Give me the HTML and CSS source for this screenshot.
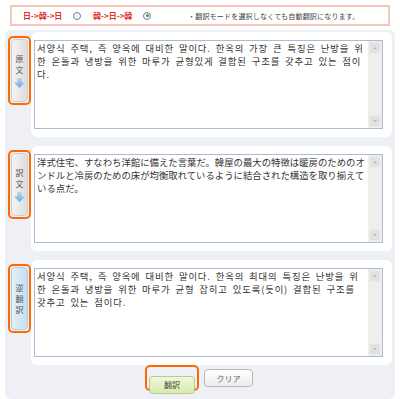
FILE: index.html
```html
<!DOCTYPE html>
<html>

<head>
    <link rel="stylesheet" href="styles.css">
</head>

<body>
    <div class="mode-bar">
        <span class="mode-label">日->韓->日</span>
        <span class="radio"></span>
        <span class="mode-label">韓->日->韓</span>
        <span class="radio checked"></span>
        <span class="mode-note">・翻訳モードを選択しなくても自動翻訳になります。</span>
    </div>

    <div class="panel">
        <div class="section">
            <div class="tab-col">
                <div class="tab">
                    <div class="tab-inner">
                        <span class="tab-text">原<br>文</span>
                        <span class="arrow"></span>
                    </div>
                </div>
            </div>
            <div class="box">
                <div class="field">
                    <textarea class="text ko">서양식 주택, 즉 양옥에 대비한 말이다. 한옥의 가장 큰 특징은 난방을 위한 온돌과 냉방을 위한 마루가 균형있게 결합된 구조를 갖추고 있는 점이다.</textarea>
                    <div class="scrollbar">
                        <span class="sb-btn up"></span>
                        <span class="sb-btn down"></span>
                    </div>
                </div>
            </div>
        </div>

        <div class="section">
            <div class="tab-col">
                <div class="tab">
                    <div class="tab-inner">
                        <span class="tab-text">訳<br>文</span>
                        <span class="arrow"></span>
                    </div>
                </div>
            </div>
            <div class="box">
                <div class="field">
                    <textarea class="text ja">洋式住宅、すなわち洋館に備えた言葉だ。韓屋の最大の特徴は暖房のためのオンドルと冷房のための床が均衡取れているように結合された構造を取り揃えている点だ。</textarea>
                    <div class="scrollbar">
                        <span class="sb-btn up"></span>
                        <span class="sb-btn down"></span>
                    </div>
                </div>
            </div>
        </div>

        <div class="section">
            <div class="tab-col">
                <div class="tab">
                    <div class="tab-inner back">
                        <span class="tab-text">逆<br>翻<br>訳</span>
                    </div>
                </div>
            </div>
            <div class="box">
                <div class="field">
                    <textarea class="text ko">서양식 주택, 즉 양옥에 대비한 말이다. 한옥의 최대의 특징은 난방을 위한 온돌과 냉방을 위한 마루가 균형 잡히고 있도록(듯이) 결합된 구조를 갖추고 있는 점이다.</textarea>
                    <div class="scrollbar">
                        <span class="sb-btn up"></span>
                        <span class="sb-btn down"></span>
                    </div>
                </div>
            </div>
        </div>

        <div class="actions">
            <div class="btn-focus">
                <button class="btn translate">翻訳</button>
            </div>
            <button class="btn clear">クリア</button>
        </div>
    </div>
</body>

</html>
```

FILE: styles.css
```css
body {
    margin: 0;
    background-color: #fff;
    font-family: "Noto Sans CJK JP", "Noto Sans CJK KR", sans-serif;
    color: #333;
}

.mode-bar {
    margin: 5px 0 0 10px;
    width: 380px;
    height: 21px;
    box-sizing: border-box;
    border: 2px solid #f8c6bd;
    display: flex;
    align-items: center;
    padding-left: 11px;
    white-space: nowrap;
}

.mode-label {
    color: #e2332b;
    font-weight: bold;
    font-size: 8px;
    width: 40px;
    margin-right: 10px;
}

.radio {
    width: 6px;
    height: 6px;
    border: 1px solid #6f7fa8;
    border-radius: 50%;
    background-color: #f4f6fa;
    margin-right: 12px;
    display: flex;
    align-items: center;
    justify-content: center;
}

.radio.checked {
    margin-right: 37px;
}

.radio.checked::after {
    content: "";
    width: 3px;
    height: 3px;
    border-radius: 50%;
    background-color: #3d9b35;
}

.mode-note {
    font-size: 7px;
    letter-spacing: 0.2px;
    color: #444;
}

.panel {
    margin: 4px 5px 0 5px;
    background-color: #eef0f5;
    border-radius: 6px;
    padding-top: 2px;
    height: 369px;
    box-sizing: border-box;
}

.section {
    display: flex;
    margin-bottom: 9px;
}

.tab-col {
    width: 26px;
    padding-top: 4px;
}

.tab {
    margin-left: 3px;
    width: 23px;
    height: 69px;
    box-sizing: border-box;
    border: 2px solid #ff6a00;
    border-radius: 5px;
    padding: 1px;
}

.tab-inner {
    height: 100%;
    box-sizing: border-box;
    border-radius: 4px;
    background: linear-gradient(to right, #f4f4f4, #dcdcdc);
    border: 1px solid #cfcfcf;
    display: flex;
    flex-direction: column;
    align-items: center;
    justify-content: center;
    gap: 3px;
}

.tab-inner.back {
    background: linear-gradient(to right, #e4f1fb, #c4def2);
    border-color: #b6cde0;
}

.tab-text {
    font-size: 8px;
    line-height: 11px;
    color: #555;
    text-align: center;
}

.arrow {
    width: 11px;
    height: 10px;
    background: linear-gradient(#b5d5f2, #6fa9de);
    clip-path: polygon(30% 0, 70% 0, 70% 45%, 100% 45%, 50% 100%, 0 45%, 30% 45%);
}

.box {
    width: 361px;
    height: 105px;
    box-sizing: border-box;
    background-color: #fff;
    border-radius: 6px;
    padding: 8px 9px 8px 3px;
}

.field {
    height: 89px;
    box-sizing: border-box;
    border: 1px solid #a7bdd3;
    display: flex;
}

.text {
    flex: 1;
    border: none;
    outline: none;
    resize: none;
    overflow: hidden;
    padding: 1px 2px;
    margin: 0;
    font-size: 9.4px;
    line-height: 13px;
    color: #333;
}

.text.ko {
    font-family: "Noto Sans CJK KR", sans-serif;
    word-spacing: 2px;
    letter-spacing: 0.85px;
}

.text.ja {
    font-family: "Noto Sans CJK JP", sans-serif;
}

.scrollbar {
    width: 14px;
    background-color: #eeeeee;
    display: flex;
    flex-direction: column;
    justify-content: space-between;
    align-items: center;
    padding: 1px 0;
    box-sizing: border-box;
}

.sb-btn {
    width: 12px;
    height: 12px;
    background-color: #e2e2e2;
    border: 1px solid #ececec;
    box-sizing: border-box;
    position: relative;
}

.sb-btn::after {
    content: "";
    position: absolute;
    left: 3px;
    width: 0;
    height: 0;
    border-left: 2px solid transparent;
    border-right: 2px solid transparent;
}

.sb-btn.up::after {
    top: 4px;
    border-bottom: 2px solid #b4b4b4;
}

.sb-btn.down::after {
    top: 4px;
    border-top: 2px solid #b4b4b4;
}

.actions {
    display: flex;
    justify-content: center;
    align-items: center;
    gap: 5px;
    margin-top: -9px;
    margin-right: 2px;
}

.btn-focus {
    width: 54px;
    height: 26px;
    box-sizing: border-box;
    border: 2px solid #ff6a00;
    border-radius: 5px;
    padding: 2px;
}

.btn {
    font-family: "Noto Sans CJK JP", sans-serif;
    font-size: 8px;
    border-radius: 4px;
    padding: 0;
    cursor: pointer;
}

.btn.translate {
    width: 100%;
    height: 100%;
    border: 1px solid #b8c89a;
    background: linear-gradient(#f0f8da, #d8ebac);
    color: #444;
}

.btn.clear {
    width: 49px;
    height: 18px;
    border: 1px solid #b9b9b9;
    background: linear-gradient(#ffffff, #ececec);
    color: #666;
}
```
